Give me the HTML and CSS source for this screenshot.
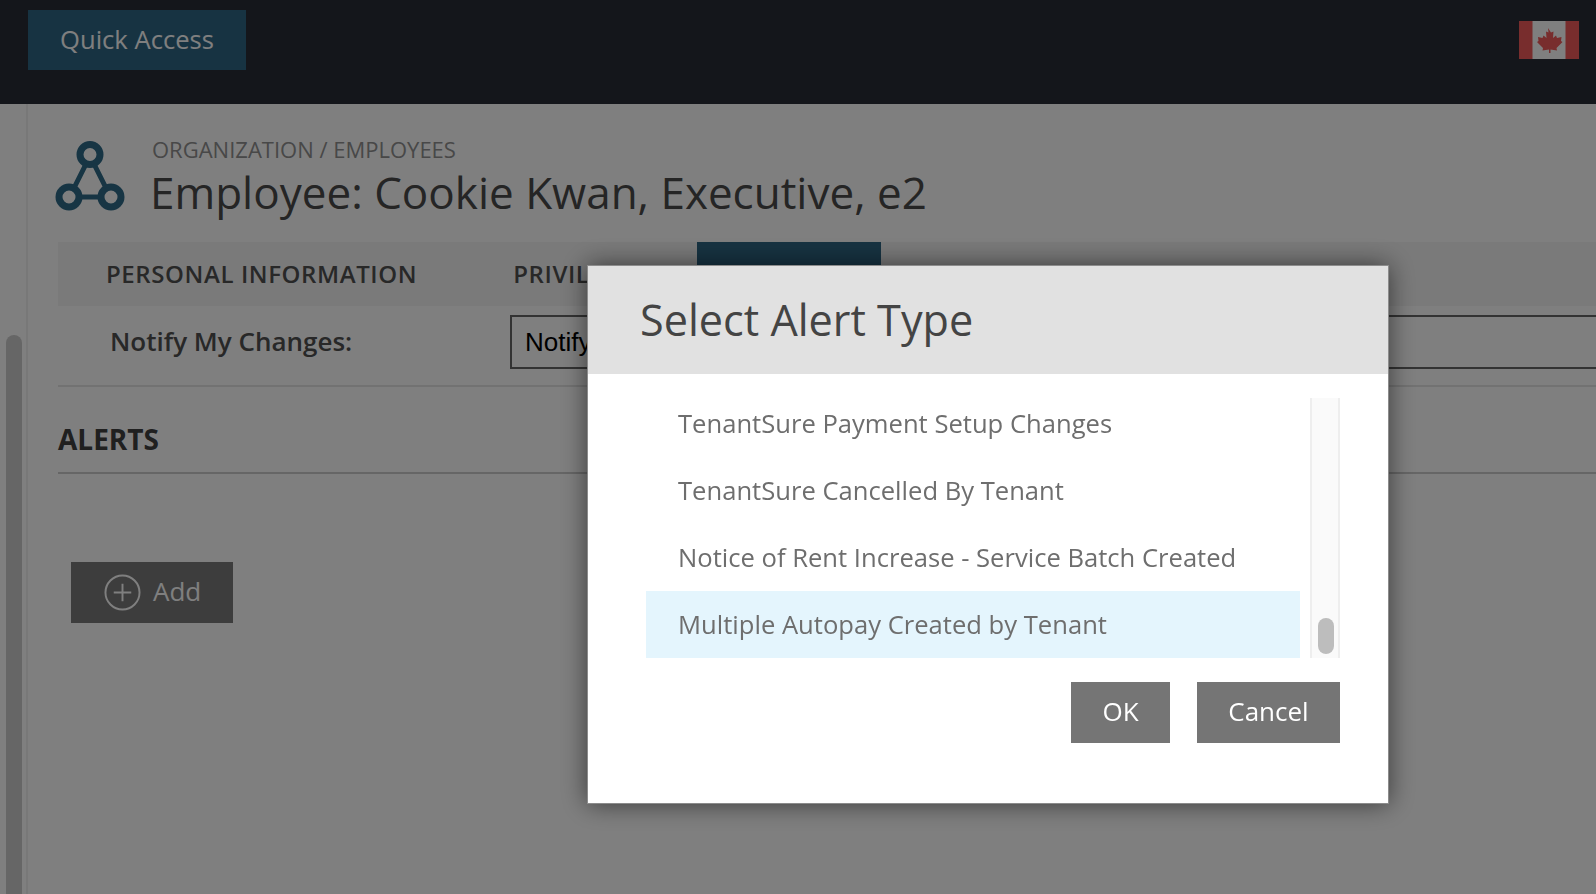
FILE: index.html
```html
<!DOCTYPE html>
<html lang="en">
<head>
<meta charset="utf-8">
<title>Employee: Cookie Kwan</title>
<link rel="stylesheet" href="styles.css">
</head>
<body>
<header class="topbar">
  <button class="quick-access">Quick Access</button>
  <svg class="flag" viewBox="0 0 60 38" aria-label="Canada">
    <rect width="60" height="38" fill="#fff"/>
    <rect width="13.500" height="38" fill="#f05a5a"/>
    <rect x="46.500" width="13.500" height="38" fill="#f05a5a"/>
    <path fill="#f05a5a" d="M29 7l3 4.500 2.500-1-.5 6.500 3-2.500 1 2.500 4.500-1-.5 4 1.500 1-6 6 .5 2.500-6.500-1v3.500h-1.500v-3.500l-6.500 1 .5-2.500-6-6 1.500-1-.5-4 4.500 1 1-2.500 3 2.500-.5-6.500 2.500 1z"/>
  </svg>
</header>
<div class="layout">
  <aside class="rail"><div class="rail-thumb"></div></aside>
  <main class="content">
    <div class="page-head">
      <svg class="org-icon" viewBox="0 0 70 70" fill="none" stroke="#2e6a88">
        <circle cx="35" cy="13.500" r="10" stroke-width="7"/>
        <circle cx="14" cy="56" r="10" stroke-width="7"/>
        <circle cx="56" cy="56" r="10" stroke-width="7"/>
        <path stroke-width="5" d="M31 23L19 47M39 23L51 47M24 56H46"/>
      </svg>
      <div class="titles">
        <div class="crumb">ORGANIZATION / EMPLOYEES</div>
        <h1 class="title">Employee: Cookie Kwan, Executive, e2</h1>
      </div>
    </div>
    <nav class="tabs">
      <span class="tab tab-first">PERSONAL INFORMATION</span>
      <span class="tab tab-second">PRIVILEGES</span>
      <span class="tab tab-active">ALERTS</span>
    </nav>
    <div class="form-row">
      <label class="form-label" for="notify">Notify My Changes:</label>
      <select class="form-select" id="notify"><option>Notify</option></select>
    </div>
    <h2 class="section">ALERTS</h2>
    <button class="add-btn">
      <svg class="add-icon" viewBox="0 0 38 38" fill="none" stroke="#fff">
        <circle cx="19" cy="19" r="17.500" stroke-width="2"/>
        <path stroke-width="2" d="M19 10V28M10 19H28"/>
      </svg>
      <span class="add-label">Add</span>
    </button>
  </main>
</div>
<div class="overlay"></div>
<section class="modal">
  <h2 class="modal-title">Select Alert Type</h2>
  <div class="modal-body">
    <div class="list">
      <ul class="list-items">
        <li class="item item-clipped">TenantSure Payment Setup Changes</li>
        <li class="item">TenantSure Cancelled By Tenant</li>
        <li class="item">Notice of Rent Increase - Service Batch Created</li>
        <li class="item item-selected">Multiple Autopay Created by Tenant</li>
      </ul>
      <div class="scroll"><div class="scroll-thumb"></div></div>
    </div>
    <div class="modal-actions">
      <button class="modal-btn btn-ok">OK</button>
      <button class="modal-btn btn-cancel">Cancel</button>
    </div>
  </div>
</section>
</body>
</html>
```
FILE: styles.css
```css
* { box-sizing: border-box; }
html, body { margin: 0; height: 100%; overflow: hidden; }
body {
  background: #fff;
  font-family: "Open Sans", sans-serif;
  color: #4a4a4a;
  display: flex;
  flex-direction: column;
}
button { font-family: inherit; border: 0; cursor: pointer; }

.topbar {
  height: 104px;
  flex: none;
  background: #282c36;
  display: flex;
  justify-content: space-between;
  align-items: flex-start;
  padding: 10px 17px 0 28px;
}
.quick-access {
  width: 218px;
  height: 60px;
  background: #2e6684;
  color: #fff;
  font-size: 25.600px;
  line-height: 60px;
  padding: 0;
}
.flag { width: 60px; height: 38px; margin-top: 11px; }

.layout { flex: 1; display: flex; min-height: 0; }
.rail {
  width: 28px;
  flex: none;
  border-right: 2px solid #f0f0f0;
  padding: 231px 0 0 6px;
}
.rail-thumb { width: 16px; height: 600px; background: #ccc; border-radius: 8px; }
.content { flex: 1; min-width: 0; padding: 30px 0 0 30px; }

.page-head { display: flex; align-items: flex-start; gap: 27px; margin-left: -3px; height: 108px; }
.org-icon { width: 70px; height: 70px; margin-top: 7px; flex: none; }
.crumb { font-size: 22px; line-height: 30px; color: #909090; }
.title { margin: 2px 0 0 -2px; font-size: 44px; font-weight: 400; line-height: 52px; color: #4a4a4a; }

.tabs {
  height: 64px;
  background: #f5f5f5;
  display: flex;
  align-items: center;
  font-size: 24px;
  font-weight: 600;
  letter-spacing: .6px;
  color: #505050;
  padding-bottom: 2px;
}
.tab-first { margin-left: 48px; }
.tab-second { margin-left: 96px; }
.tab-active {
  background: #2e6684;
  color: #fff;
  align-self: stretch;
  width: 184px;
  margin-left: 48px;
  margin-bottom: -2px;
  display: flex;
  align-items: center;
  justify-content: center;
}

.form-row {
  height: 81px;
  display: flex;
  align-items: center;
  border-bottom: 2px solid #e4e4e4;
  padding-bottom: 8px;
}
.form-label { margin-left: 52px; width: 400px; margin-top: -2px; font-size: 26px; font-weight: 600; color: #505050; }
.form-select {
  flex: 1;
  height: 54px;
  border: 2px solid #666;
  border-right: 0;
  border-radius: 0;
  background: #fff;
  appearance: none;
  font-family: "Liberation Sans", sans-serif;
  font-size: 26px;
  padding-left: 13px;
  color: #000;
}

.section {
  margin: 0;
  height: 87px;
  padding-top: 32px;
  font-size: 28px;
  font-weight: 700;
  line-height: 40px;
  color: #404040;
  border-bottom: 2px solid #ccc;
}
.add-btn {
  margin: 88px 0 0 13px;
  width: 162px;
  height: 61px;
  background: #7a7a7a;
  color: #fff;
  display: flex;
  align-items: center;
  gap: 12px;
  padding: 0 0 0 33px;
  font-size: 26px;
}
.add-icon { width: 37px; height: 37px; }
.add-label { margin-top: -3px; }

.overlay { position: fixed; inset: 0; background: rgba(0,0,0,.5); }

.modal {
  position: fixed;
  left: 587px;
  top: 265px;
  width: 802px;
  height: 539px;
  background: #fff;
  border: 1px solid #8c8c8c;
  box-shadow: 0 0 24px rgba(0,0,0,.55);
}
.modal-title {
  margin: 0;
  height: 108px;
  background: #e1e1e1;
  padding-left: 52px;
  font-size: 43.200px;
  font-weight: 400;
  line-height: 108px;
  color: #444;
}
.modal-body { padding: 24px 48px 0 58px; }
.list { display: flex; height: 260px; }
.list-items { list-style: none; margin: 0; padding: 0; width: 654px; flex: none; overflow: hidden; }
.item {
  height: 67px;
  padding-left: 32px;
  font-size: 25.600px;
  line-height: 67px;
  color: #6e6e6e;
  white-space: nowrap;
}
.item-clipped { height: 59px; line-height: 51px; }
.item-selected { background: #e4f5fd; }
.scroll {
  width: 30px;
  margin-left: 10px;
  background: #fafafa;
  border-left: 2px solid #eee;
  border-right: 2px solid #eee;
  padding: 220px 0 0 6px;
}
.scroll-thumb { width: 16px; height: 36px; background: #bdbdbd; border-radius: 8px; }
.modal-actions { display: flex; justify-content: flex-end; gap: 27px; margin-top: 24px; }
.modal-btn { height: 61px; background: #757575; color: #fff; font-size: 26px; line-height: 58px; padding: 0 0 3px; }
.btn-ok { width: 99px; }
.btn-cancel { width: 143px; }
```
